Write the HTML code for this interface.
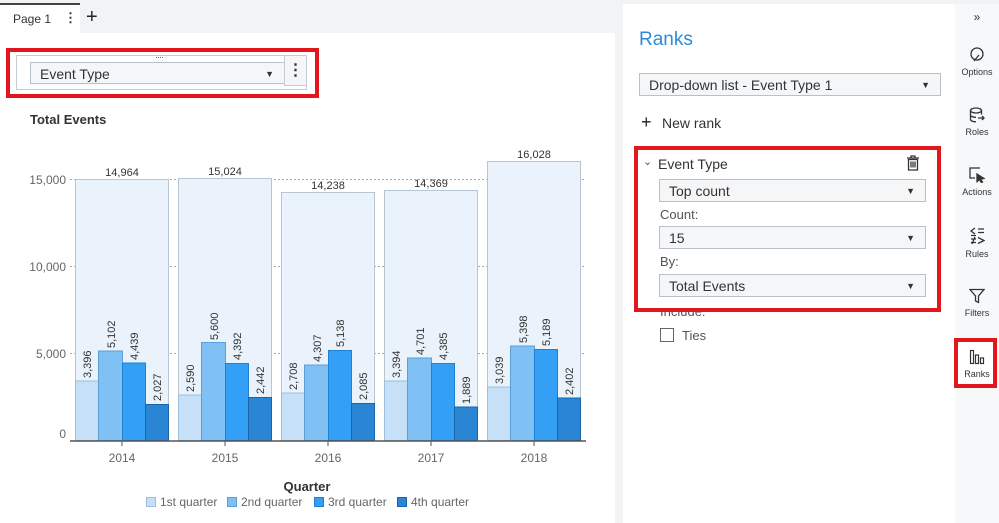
<!DOCTYPE html>
<html><head><meta charset="utf-8"><style>
*{margin:0;padding:0;box-sizing:border-box}
body{width:999px;height:523px;overflow:hidden;background:#f2f3f5;font-family:"Liberation Sans",sans-serif;position:relative;color:#333}
.abs{position:absolute}
.dd{position:absolute;background:#f4f6f8;border:1px solid #b9c0c8;font-size:14px;color:#333;padding-left:9px;line-height:22px}
.dd .ar{position:absolute;right:10px;top:0;font-size:9px}
.side{position:absolute;left:955px;width:44px;text-align:center;font-size:9px;color:#333}
.side svg{display:block;margin:0 auto 4px}
</style></head><body>
<div class="abs" style="left:0;top:3px;width:80px;height:30px;background:#fff;border-top:2px solid #444"></div>
<div class="abs" style="left:13px;top:12px;font-size:12px;color:#333">Page 1</div>
<div class="abs" style="left:64px;top:10px;font-size:13px;font-weight:bold;color:#333">⋮</div>
<div class="abs" style="left:86px;top:6px;font-size:20px;color:#222">+</div>
<div class="abs" style="left:0;top:33px;width:615px;height:490px;background:#fff"></div>
<div class="abs" style="left:6px;top:48px;width:313px;height:50px;border:4px solid #e3161e"></div>
<div class="abs" style="left:16px;top:55px;width:291px;height:35px;border:1px solid #c4cad1"></div>
<div class="abs" style="left:155px;top:52px;font-size:9px;color:#555;letter-spacing:-1px">····</div>
<div class="dd" style="left:30px;top:62px;width:255px;height:22px">Event Type<span class="ar">▼</span></div>
<div class="abs" style="left:284px;top:55px;width:23px;height:31px;background:#f4f6f8;border:1px solid #c4cad1;font-weight:bold;text-align:center;font-size:16px;line-height:30px">⋮</div>
<div class="abs" style="left:30px;top:112px;font-size:13px;font-weight:bold;color:#333">Total Events</div>
<svg class="abs" style="left:0;top:0" width="615" height="523" font-family="Liberation Sans, sans-serif">
<g stroke="#aaa" stroke-dasharray="2,2" stroke-width="1">
<line x1="70" y1="179.5" x2="586" y2="179.5"/><line x1="70" y1="266.5" x2="586" y2="266.5"/><line x1="70" y1="353.5" x2="586" y2="353.5"/></g>
<g font-size="12" fill="#666" text-anchor="end"><text x="66" y="184">15,000</text><text x="66" y="271">10,000</text><text x="66" y="358">5,000</text><text x="66" y="438">0</text></g>
<g fill="#eaf3fc" stroke="#b9c6d2">
<rect x="75.5" y="179.5" width="93" height="261"/><rect x="178.5" y="178.5" width="93" height="262"/><rect x="281.5" y="192.5" width="93" height="248"/><rect x="384.5" y="190.5" width="93" height="250"/><rect x="487.5" y="161.5" width="93" height="279"/></g>
<g font-size="11" fill="#333" text-anchor="middle"><text x="122" y="176">14,964</text><text x="225" y="175">15,024</text><text x="328" y="189">14,238</text><text x="431" y="187">14,369</text><text x="534" y="158">16,028</text></g>
<g stroke-width="1">
<g fill="#c6e1f7" stroke="#9bbfdc"><rect x="75.5" y="381" width="23" height="59.5"/><rect x="178.5" y="395" width="23" height="45.5"/><rect x="281.5" y="393" width="23" height="47.5"/><rect x="384.5" y="381" width="23" height="59.5"/><rect x="487.5" y="387" width="23" height="53.5"/></g>
<g fill="#7fc0f5" stroke="#5a9fd8"><rect x="98.5" y="351" width="24" height="89.5"/><rect x="201.5" y="342.5" width="24" height="98"/><rect x="304.5" y="365" width="24" height="75.5"/><rect x="407.5" y="358" width="24" height="82.5"/><rect x="510.5" y="346" width="24" height="94.5"/></g>
<g fill="#33a0f5" stroke="#1f7fd0"><rect x="122.5" y="363" width="23" height="77.5"/><rect x="225.5" y="363.5" width="23" height="77"/><rect x="328.5" y="350.5" width="23" height="90"/><rect x="431.5" y="363.5" width="23" height="77"/><rect x="534.5" y="349.5" width="23" height="91"/></g>
<g fill="#2a86d4" stroke="#1a65a8"><rect x="145.5" y="404.5" width="23" height="36"/><rect x="248.5" y="397.5" width="23" height="43"/><rect x="351.5" y="403.5" width="23" height="37"/><rect x="454.5" y="407" width="23" height="33.5"/><rect x="557.5" y="398" width="23" height="42.5"/></g>
</g>
<g font-size="11" fill="#333">
<text transform="translate(91,378) rotate(-90)">3,396</text><text transform="translate(115,348) rotate(-90)">5,102</text><text transform="translate(138,360) rotate(-90)">4,439</text><text transform="translate(161,401) rotate(-90)">2,027</text>
<text transform="translate(194,392) rotate(-90)">2,590</text><text transform="translate(218,340) rotate(-90)">5,600</text><text transform="translate(241,360) rotate(-90)">4,392</text><text transform="translate(264,394) rotate(-90)">2,442</text>
<text transform="translate(297,390) rotate(-90)">2,708</text><text transform="translate(321,362) rotate(-90)">4,307</text><text transform="translate(344,347) rotate(-90)">5,138</text><text transform="translate(367,400) rotate(-90)">2,085</text>
<text transform="translate(400,378) rotate(-90)">3,394</text><text transform="translate(424,355) rotate(-90)">4,701</text><text transform="translate(447,360) rotate(-90)">4,385</text><text transform="translate(470,404) rotate(-90)">1,889</text>
<text transform="translate(503,384) rotate(-90)">3,039</text><text transform="translate(527,343) rotate(-90)">5,398</text><text transform="translate(550,346) rotate(-90)">5,189</text><text transform="translate(573,395) rotate(-90)">2,402</text>
</g>
<line x1="70" y1="441" x2="586" y2="441" stroke="#555" stroke-width="1.5"/>
<g stroke="#555"><line x1="122" y1="441" x2="122" y2="446"/><line x1="225" y1="441" x2="225" y2="446"/><line x1="328" y1="441" x2="328" y2="446"/><line x1="431" y1="441" x2="431" y2="446"/><line x1="534" y1="441" x2="534" y2="446"/></g>
<g font-size="12" fill="#666" text-anchor="middle"><text x="122" y="462">2014</text><text x="225" y="462">2015</text><text x="328" y="462">2016</text><text x="431" y="462">2017</text><text x="534" y="462">2018</text></g>
<text x="307" y="491" font-size="13" font-weight="bold" fill="#333" text-anchor="middle">Quarter</text>
<rect x="146.5" y="497.5" width="9" height="9" fill="#c6e1f7" stroke="#9bbfdc"/><rect x="227.5" y="497.5" width="9" height="9" fill="#7fc0f5" stroke="#5a9fd8"/><rect x="314.5" y="497.5" width="9" height="9" fill="#33a0f5" stroke="#1f7fd0"/><rect x="397.5" y="497.5" width="9" height="9" fill="#2a86d4" stroke="#1a65a8"/>
<g font-size="12" fill="#666"><text x="160" y="506">1st quarter</text><text x="241" y="506">2nd quarter</text><text x="328" y="506">3rd quarter</text><text x="411" y="506">4th quarter</text></g>
</svg>
<div class="abs" style="left:623px;top:4px;width:332px;height:519px;background:#fff"></div>
<div class="abs" style="left:639px;top:29px;font-size:19px;color:#2f8ad8">Ranks</div>
<div class="dd" style="left:639px;top:73px;width:302px;height:23px">Drop-down list - Event Type 1<span class="ar">▼</span></div>
<div class="abs" style="left:641px;top:112px;font-size:18px;color:#222">+</div>
<div class="abs" style="left:662px;top:115px;font-size:14px;color:#333">New rank</div>
<div class="abs" style="left:634px;top:146px;width:307px;height:166px;border:4px solid #e3161e"></div>
<div class="abs" style="left:643px;top:155px;font-size:11px;color:#555">⌄</div>
<div class="abs" style="left:658px;top:156px;font-size:14px;color:#333">Event Type</div>
<svg class="abs" style="left:906px;top:155px" width="14" height="16" fill="none" stroke="#333" stroke-width="1.3"><path d="M1 3h12M5 3V1h4v2M2.5 4.5h9V15h-9zM5 6.5v6M7 6.5v6M9 6.5v6"/></svg>
<div class="dd" style="left:659px;top:179px;width:267px;height:23px">Top count<span class="ar">▼</span></div>
<div class="abs" style="left:660px;top:207px;font-size:13px;color:#555">Count:</div>
<div class="dd" style="left:659px;top:226px;width:267px;height:23px">15<span class="ar">▼</span></div>
<div class="abs" style="left:660px;top:254px;font-size:13px;color:#555">By:</div>
<div class="dd" style="left:659px;top:274px;width:267px;height:23px">Total Events<span class="ar">▼</span></div>
<div class="abs" style="left:660px;top:312px;width:80px;height:6px;overflow:hidden"><div style="font-size:13px;color:#555;margin-top:-8px">Include:</div></div>
<div class="abs" style="left:660px;top:328px;width:14px;height:14px;border:1px solid #666"></div>
<div class="abs" style="left:682px;top:328px;font-size:13px;color:#555">Ties</div>
<div class="abs" style="left:955px;top:4px;width:44px;height:519px;background:#f7f8fa"></div>
<div class="side" style="top:10px;font-size:12px;color:#333">»</div>
<div class="side" style="top:47px"><svg width="16" height="16" fill="none" stroke="#333" stroke-width="1.3"><circle cx="8" cy="7" r="6"/><path d="M5 14l5-6"/></svg>Options</div>
<div class="side" style="top:107px"><svg width="16" height="16" fill="none" stroke="#333" stroke-width="1.3"><ellipse cx="7" cy="3.5" rx="5.5" ry="2.5"/><path d="M1.5 3.5v9c0 1.2 2.5 2.3 5.5 2.3M12.5 3.5v4M1.5 8c0 1.2 2.5 2.3 5.5 2.3M9 11h6M13 9l2 2-2 2"/></svg>Roles</div>
<div class="side" style="top:167px"><svg width="16" height="16" fill="none" stroke="#333" stroke-width="1.3"><path d="M11 1H1v10h5"/><path d="M8 7l7 4.5-3.5.5 2 3-1 .6-2-3-2.5 2z" fill="#333"/></svg>Actions</div>
<div class="side" style="top:227px"><svg width="16" height="18" fill="none" stroke="#333" stroke-width="1.3"><path d="M6 1L2 4l4 3M2 8.5h5M9 2h6M9 5.5h6M2 12h5M2 15.5h5M6 10l-3 7M9 10.5l6 3-6 3"/></svg>Rules</div>
<div class="side" style="top:288px"><svg width="16" height="16" fill="none" stroke="#333" stroke-width="1.3"><path d="M1 1.5h14L9.5 8v6.5l-3-1.5V8z"/></svg>Filters</div>
<div class="abs" style="left:954px;top:338px;width:43px;height:50px;border:4px solid #e3161e;background:#fff"></div>
<div class="side" style="top:349px"><svg width="16" height="16" fill="none" stroke="#333" stroke-width="1.2"><rect x="1.5" y="1.5" width="3" height="13"/><rect x="6.5" y="6" width="3" height="8.5"/><rect x="11.5" y="9" width="3" height="5.5"/></svg>Ranks</div>
</body></html>
